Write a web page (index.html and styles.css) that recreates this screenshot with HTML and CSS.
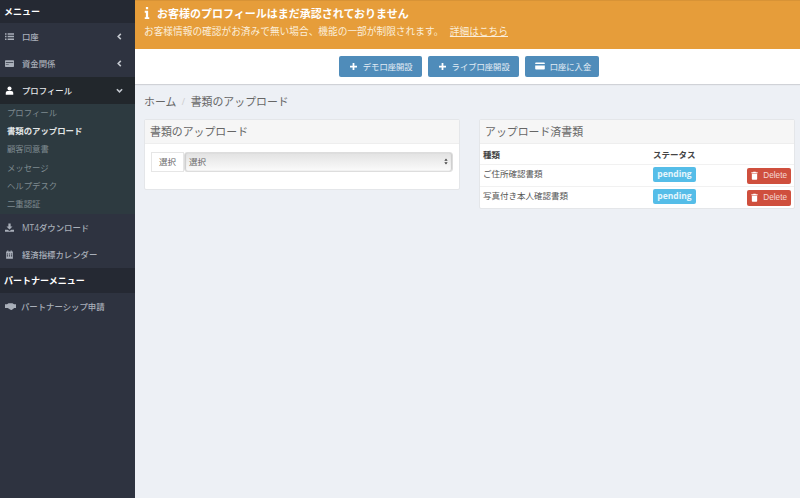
FILE: index.html
```html
<!DOCTYPE html>
<html lang="ja">
<head>
    <meta charset="UTF-8">
    <title>書類のアップロード</title>
    <link rel="stylesheet" href="styles.css">
</head>
<body>

<div class="layout">
    <!-- Sidebar -->
    <nav class="sidebar">
        <div class="side-head">メニュー</div>
        <a class="side-item">
            <svg class="side-icon" viewBox="0 0 12 12"><path d="M0 1.500h2v2H0zM3.500 1.500H12v2H3.500zM0 5h2v2H0zM3.500 5H12v2H3.500zM0 8.500h2v2H0zM3.500 8.500H12v2H3.500z"/></svg>
            <span>口座</span>
            <svg class="side-arrow" viewBox="0 0 8 8"><path d="M5.500 1 L2.500 4 L5.500 7" /></svg>
        </a>
        <a class="side-item">
            <svg class="side-icon" viewBox="0 0 12 12"><path fill-rule="evenodd" d="M0 2.500a1 1 0 0 1 1-1h10a1 1 0 0 1 1 1v7a1 1 0 0 1-1 1H1a1 1 0 0 1-1-1zM1 4v1h10V4zM1 6.500v.7h4v-.7z"/></svg>
            <span>資金関係</span>
            <svg class="side-arrow" viewBox="0 0 8 8"><path d="M5.500 1 L2.500 4 L5.500 7" /></svg>
        </a>
        <a class="side-item active">
            <svg class="side-icon" viewBox="0 0 12 12"><circle cx="6" cy="3.200" r="2.700"/><path d="M1 11.500V9a2.500 2.500 0 0 1 2.500-2.500h5A2.500 2.500 0 0 1 11 9v2.500z"/></svg>
            <span>プロフィール</span>
            <svg class="side-arrow" viewBox="0 0 8 8"><path d="M1 2.500 L4 5.500 L7 2.500" /></svg>
        </a>
        <div class="submenu">
            <a>プロフィール</a>
            <a class="current">書類のアップロード</a>
            <a>顧客同意書</a>
            <a>メッセージ</a>
            <a>ヘルプデスク</a>
            <a>二重認証</a>
        </div>
        <a class="side-item">
            <svg class="side-icon" viewBox="0 0 12 12"><path d="M4.500 0.500h3V4.500H10L6 8.500 2 4.500h2.500zM0 9h3.500L6 10.500 8.500 9H12v2.500H0z"/></svg>
            <span>MT4ダウンロード</span>
        </a>
        <a class="side-item">
            <svg class="side-icon" viewBox="0 0 12 12"><path fill-rule="evenodd" d="M1.500 2H3V.5h1.500V2h3V.5H9V2h1.500v9.500h-9zM2.500 4.500V6H4V4.500zM5.200 4.500V6h1.600V4.500zM8 4.500V6h1.500V4.500zM2.500 7V8.500H4V7zM5.200 7V8.500h1.600V7zM8 7V8.500h1.500V7z"/></svg>
            <span>経済指標カレンダー</span>
        </a>
        <div class="side-head partner">パートナーメニュー</div>
        <a class="side-item">
            <svg class="side-icon wide" viewBox="0 0 14 10"><path d="M0 2h2.500l2-1.200h5l2 1.200H14v5h-2.200L8.500 9.500 7 9 3.500 7H0z"/></svg>
            <span>パートナーシップ申請</span>
        </a>
    </nav>

    <!-- Main -->
    <div class="main">
        <div class="notice">
            <div class="notice-title">
                <svg class="notice-icon" viewBox="0 0 8 16"><path d="M2.500 0h3v3h-3zM1 5h4.500v8.500H7V16H1v-2.500h1.500V7.500H1z"/></svg>
                お客様のプロフィールはまだ承認されておりません
            </div>
            <p>お客様情報の確認がお済みで無い場合、機能の一部が制限されます。 <a class="notice-link">詳細はこちら</a></p>
        </div>

        <div class="actions">
            <button class="btn-action">
                <svg class="btn-icon" viewBox="1 1 8 8"><path d="M4 1h2v3h3v2H6v3H4V6H1V4h3z"/></svg>
                デモ口座開設
            </button>
            <button class="btn-action">
                <svg class="btn-icon" viewBox="1 1 8 8"><path d="M4 1h2v3h3v2H6v3H4V6H1V4h3z"/></svg>
                ライブ口座開設
            </button>
            <button class="btn-action btn-deposit">
                <svg class="btn-icon card" viewBox="0 0 12 10"><path d="M1 0.500h10a1 1 0 0 1 1 1V2.500H0V1.500a1 1 0 0 1 1-1zM0 4.500h12v4a1 1 0 0 1-1 1H1a1 1 0 0 1-1-1z"/></svg>
                口座に入金
            </button>
        </div>

        <div class="content">
            <div class="breadcrumb">
                <span>ホーム</span><span class="sep">/</span><span>書類のアップロード</span>
            </div>

            <div class="columns">
                <section class="panel">
                    <h3 class="panel-head">書類のアップロード</h3>
                    <div class="panel-body">
                        <div class="file-group">
                            <span class="file-label">選択</span>
                            <div class="file-select">
                                <span>選択</span>
                                <svg class="select-arrows" viewBox="0 0 6 10"><path d="M3 0.500 5.500 4h-5zM3 9.500 0.500 6h5z"/></svg>
                            </div>
                        </div>
                    </div>
                </section>

                <section class="panel">
                    <h3 class="panel-head">アップロード済書類</h3>
                    <table class="doc-table">
                        <thead>
                            <tr><th>種類</th><th>ステータス</th><th></th></tr>
                        </thead>
                        <tbody>
                            <tr>
                                <td>ご住所確認書類</td>
                                <td><span class="badge">pending</span></td>
                                <td class="cell-btn"><button class="btn-delete"><svg class="trash" viewBox="0 0 10 12"><path d="M0.500 1.500H3.200V0.500h3.600v1h2.700v1.200H0.500zM1.200 3.500h7.600V11a1 1 0 0 1-1 1H2.200a1 1 0 0 1-1-1z"/></svg>Delete</button></td>
                            </tr>
                            <tr>
                                <td>写真付き本人確認書類</td>
                                <td><span class="badge">pending</span></td>
                                <td class="cell-btn"><button class="btn-delete"><svg class="trash" viewBox="0 0 10 12"><path d="M0.500 1.500H3.200V0.500h3.600v1h2.700v1.200H0.500zM1.200 3.500h7.600V11a1 1 0 0 1-1 1H2.200a1 1 0 0 1-1-1z"/></svg>Delete</button></td>
                            </tr>
                        </tbody>
                    </table>
                </section>
            </div>
        </div>
    </div>
</div>

</body>
</html>
```

FILE: styles.css
```css
* {
    margin: 0;
    padding: 0;
    box-sizing: border-box;
}

html, body {
    height: 100%;
    overflow: hidden;
}

body {
    font-family: "Open Sans", "Noto Sans CJK JP", sans-serif;
    font-size: 8.400px;
    color: #555;
    background-color: #edf0f5;
}

.layout {
    display: flex;
    height: 498px;
}

/* Sidebar */
.sidebar {
    width: 135px;
    flex-shrink: 0;
    background-color: #2e3340;
    color: #a9afb9;
}

.side-head {
    height: 23px;
    padding-left: 4px;
    display: flex;
    align-items: center;
    background-color: #252933;
    color: #fff;
    font-weight: 700;
    font-size: 9px;
}

.side-head.partner {
    height: 25px;
}

.side-item {
    display: flex;
    align-items: center;
    height: 27px;
    padding: 0 12px 0 5px;
    font-weight: 500;
}

.side-item span {
    flex: 1;
    padding-bottom: 2px;
}

.side-icon {
    width: 9px;
    height: 9px;
    margin-right: 8px;
    fill: #a9afb9;
}

.side-icon.wide {
    width: 11px;
    margin-right: 5px;
}

.side-arrow {
    width: 7px;
    height: 7px;
    fill: none;
    stroke: #c4c8cf;
    stroke-width: 1.800;
}

.side-item.active {
    background-color: #22272c;
    color: #e6e8ea;
}

.side-item.active .side-icon {
    fill: #fff;
}

.submenu {
    display: flex;
    flex-direction: column;
    height: 110px;
    padding-left: 7px;
    background-color: #2d3a40;
    color: #7f8a90;
}

.submenu a {
    display: flex;
    align-items: center;
    height: 18.200px;
    padding-bottom: 2px;
}

.submenu a.current {
    color: #e4e7e8;
    font-weight: 700;
}

/* Main */
.main {
    flex: 1;
    min-width: 0;
    display: flex;
    flex-direction: column;
}

.notice {
    height: 49px;
    padding: 5px 9px 0;
    background-color: #e69d3a;
    box-shadow: inset 0 1px 0 rgba(0, 0, 0, 0.06);
    color: #fff;
}

.notice-title {
    display: flex;
    align-items: center;
    gap: 7px;
    font-size: 11px;
    font-weight: 700;
    height: 16px;
}

.notice-icon {
    width: 6px;
    height: 14px;
    fill: #fff;
}

.notice p {
    margin-top: 4px;
    font-size: 9.700px;
    line-height: 14px;
    color: #fbeeda;
}

.notice-link {
    margin-left: 4px;
    text-decoration: underline;
}

.actions {
    height: 35px;
    display: flex;
    justify-content: center;
    gap: 6px;
    padding: 7px 0 0 3px;
    background-color: #fff;
    box-shadow: 0 1px 1px rgba(0, 0, 0, 0.12);
}

.btn-action {
    height: 21px;
    display: flex;
    align-items: center;
    padding: 0 9px 1px 11px;
    border: none;
    border-radius: 2px;
    background-color: #4f8cba;
    color: #e3edf5;
    font-family: inherit;
    font-size: 8.300px;
}

.btn-action.btn-deposit {
    padding-left: 10px;
    padding-right: 8px;
}

.btn-icon {
    width: 7px;
    height: 7px;
    margin-right: 6px;
    fill: #fff;
}

.btn-icon.card {
    width: 10px;
    height: 8px;
    margin-right: 5px;
}

.content {
    flex: 1;
    padding: 10px 9px 0;
}

.breadcrumb {
    display: flex;
    align-items: center;
    height: 14px;
    font-size: 10.900px;
    color: #666;
}

.sep {
    margin: 0 5.500px;
    color: #ccc;
    font-size: 9px;
}

.columns {
    display: grid;
    grid-template-columns: 316px 316px;
    gap: 19px;
    margin-top: 11px;
    align-items: start;
}

.panel {
    background-color: #fff;
    border: 1px solid #e4e6e9;
    border-radius: 2px;
}

.panel-head {
    height: 24px;
    display: flex;
    align-items: center;
    padding: 0 0 2px 5px;
    background-color: #f6f6f6;
    border-bottom: 1px solid #eee;
    font-size: 10.900px;
    font-weight: 400;
    color: #666;
}

.panel-body {
    padding: 8px 6px 17px;
}

.file-group {
    display: flex;
    height: 20px;
}

.file-label {
    width: 33px;
    display: flex;
    align-items: center;
    justify-content: center;
    padding-bottom: 2px;
    border: 1px solid #e6e6e6;
    color: #666;
    font-size: 8.500px;
}

.file-select {
    flex: 1;
    display: flex;
    align-items: center;
    justify-content: space-between;
    padding: 0 4px 2px 4px;
    border: 1px solid #ddd;
    border-radius: 3px;
    background: linear-gradient(#e2e2e2, #fbfbfb);
    box-shadow: inset 1px 0 1px #ccc, inset -1px 0 1px #ccc;
    font-size: 8.500px;
    color: #666;
}

.select-arrows {
    width: 4px;
    height: 7px;
    fill: #444;
}

.doc-table {
    width: 100%;
    border-collapse: collapse;
    font-size: 8.500px;
}

.doc-table th {
    height: 20px;
    padding-left: 3px;
    text-align: left;
    font-weight: 700;
    font-size: 8.500px;
    color: #444;
}

.doc-table td {
    height: 22px;
    padding: 3px 0 0 3px;
    line-height: 12px;
    vertical-align: top;
    border-top: 1px solid #f1f1f1;
}

.doc-table th:first-child,
.doc-table td:first-child {
    width: 173px;
}

.doc-table th:nth-child(2) {
    padding-left: 0;
}

.doc-table td:nth-child(2) {
    width: 94px;
    padding: 2px 0 0;
}

.doc-table td.cell-btn {
    text-align: right;
    padding: 3px 3px 0 0;
}

.badge {
    display: block;
    width: 43px;
    height: 15px;
    line-height: 14px;
    text-align: center;
    border-radius: 2px;
    background-color: #55bde8;
    color: #e6f6fc;
    font-weight: 700;
    font-size: 8.500px;
}

.btn-delete {
    display: inline-flex;
    align-items: center;
    height: 16px;
    padding: 0 4px;
    border: none;
    border-radius: 2px;
    background-color: #cf4f3d;
    color: #f4d9d5;
    font-family: "Liberation Sans", sans-serif;
    font-size: 8.200px;
}

.trash {
    width: 7px;
    height: 9px;
    margin-right: 5px;
    fill: #fff;
}
```
